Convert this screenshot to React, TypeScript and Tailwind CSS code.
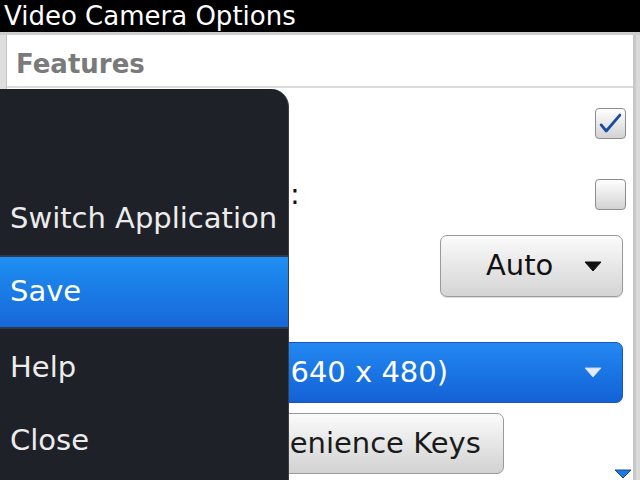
import React from "react";

const menuItems = [
  { label: "Switch Application", h: "h-[72px]", active: false },
  { label: "Save", h: "h-[70px]", active: true },
  { label: "Help", h: "h-[78px]", active: false },
  { label: "Close", h: "h-[64px]", active: false },
];

function Checkbox({ checked }: { checked: boolean }) {
  return (
    <div className="w-[31px] h-[31px] rounded-[4px] border border-[#8c8c8c] bg-gradient-to-b from-[#ffffff] to-[#d3d3d3] shadow-[inset_0_1px_0_#fff] flex items-center justify-center">
      {checked && (
        <svg width="31" height="31" viewBox="0 0 31 31">
          <path d="M5.5 17 L11 23.5 L25.5 6.5" fill="none" stroke="#1c4c9f" strokeWidth="3" strokeLinecap="round" strokeLinejoin="round" />
        </svg>
      )}
    </div>
  );
}

function Triangle({ color, stroke }: { color: string; stroke?: string }) {
  return (
    <svg width="18" height="11" viewBox="0 0 18 11">
      <path d="M1 1 H17 L9 10 Z" fill={color} stroke={stroke ?? color} strokeWidth="1" strokeLinejoin="round" />
    </svg>
  );
}

export default function App() {
  return (
    <div className="relative w-[640px] h-[480px] overflow-hidden bg-white font-['DejaVu_Sans',sans-serif]">
      {/* Title bar */}
      <div className="h-[32px] bg-black text-white text-[26px] leading-[32px] pl-[4px] whitespace-nowrap">
        Video Camera Options
      </div>

      {/* Screen body */}
      <div className="flex h-[448px] border-t-[3px] border-[#cdcdcd]">
        <div className="w-[7px] bg-[#dedede] border-r border-[#c2c2c2]" />

        <div className="flex-1 flex flex-col">
          {/* Section header */}
          <div className="h-[53px] border-b-2 border-[#dcdcdc] flex items-center pl-[9px] pt-[8px] text-[26px] font-bold text-[#7a7a7a]">
            Features
          </div>

          {/* Rows (labels sit under the menu) */}
          <div className="h-[71px] flex items-center justify-end pr-[7px]">
            <Checkbox checked />
          </div>
          <div className="h-[71px] flex items-center justify-between pl-[283px] pr-[7px] text-[29px] text-[#111]">
            <span>:</span>
            <Checkbox checked={false} />
          </div>
          <div className="h-[72px] flex items-center justify-end pr-[10px] text-[29px]">
            <div className="w-[183px] h-[62px] rounded-[7px] border border-[#9a9a9a] bg-gradient-to-b from-[#fbfbfb] to-[#d4d4d4] shadow-[0_1px_1px_rgba(0,0,0,0.15)] flex items-center pl-[45px] pr-[20px]">
              <span className="text-[#111]">Auto</span>
              <span className="ml-auto">
                <Triangle color="#111" />
              </span>
            </div>
          </div>

          {/* Video format dropdown */}
          <div className="mt-[40px] pl-[10px] pr-[10px]">
            <div className="h-[61px] rounded-[7px] border border-[#1656c4] bg-gradient-to-b from-[#2388f2] to-[#1462d6] flex items-center pl-[147px] pr-[20px] text-[29px] text-white whitespace-nowrap">
              <span>Normal (640 x 480)</span>
              <span className="ml-auto">
                <Triangle color="#e6ecf5" stroke="#c9d3e2" />
              </span>
            </div>
          </div>

          {/* Convenience keys button */}
          <div className="mt-[10px] pl-[186px]">
            <div className="w-[311px] h-[61px] rounded-[7px] border border-[#9a9a9a] bg-gradient-to-b from-[#fbfbfb] to-[#d2d2d2] flex items-center justify-center text-[29px] text-[#1a1a1a] whitespace-nowrap">
              Convenience Keys
            </div>
          </div>
        </div>

        <div className="w-[7px] bg-[#dadada] border-l-[3px] border-[#c8c8c8]" />
      </div>

      {/* Scroll-down indicator */}
      <div className="absolute left-[614px] top-[469px]">
        <svg width="18" height="10" viewBox="0 0 18 10">
          <path d="M1 1 H17 L9 9 Z" fill="#1f7ae0" stroke="#164a8c" strokeWidth="1" strokeLinejoin="round" />
        </svg>
      </div>

      {/* Popup menu */}
      <div className="absolute left-0 top-[89px] w-[289px] h-[391px] bg-[#1f2128] rounded-tr-[18px] border-r border-[#3a3e46] flex flex-col">
        <div className="h-[94px]" />
        {menuItems.map((item, i) => {
          const nearActive = item.active || (i > 0 && menuItems[i - 1].active);
          return (
            <React.Fragment key={item.label}>
              {i > 0 && <div className={`h-[2px] ${nearActive ? "bg-[#2f3948]" : "bg-[#1f2128]"}`} />}
              <div
                className={`${item.h} flex items-center pl-[10px] text-[29px] whitespace-nowrap ${
                  item.active ? "bg-gradient-to-b from-[#1e8ff2] to-[#1867d8] text-white" : "text-[#ececec]"
                }`}
              >
                {item.label}
              </div>
            </React.Fragment>
          );
        })}
      </div>
    </div>
  );
}
